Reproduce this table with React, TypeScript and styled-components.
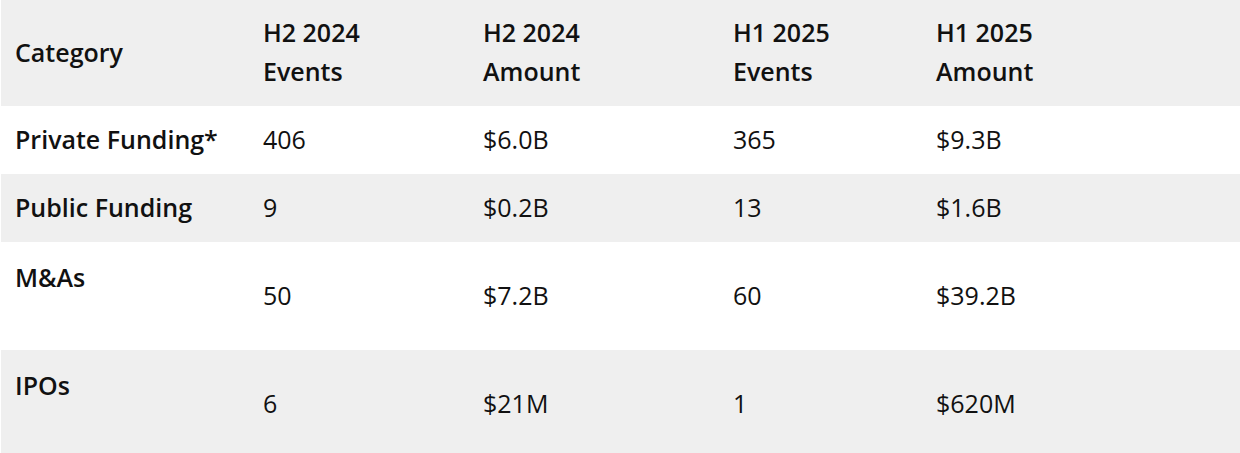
import React from "react";
import styled, { createGlobalStyle } from "styled-components";

const GlobalStyle = createGlobalStyle`
  html, body {
    margin: 0;
    padding: 0;
    background: #ffffff;
  }
  body {
    font-family: "Open Sans", "Noto Sans", "Liberation Sans", sans-serif;
    color: #111111;
  }
`;

const Wrap = styled.div`
  padding-left: 1px;
  width: 1239px;
`;

const Table = styled.table`
  width: 100%;
  border-collapse: collapse;
  table-layout: fixed;
  font-size: 25px;
  line-height: 39px;
`;

const HeadRow = styled.tr`
  background: #efefef;
`;

const HeadCell = styled.th`
  text-align: left;
  font-weight: 600;
  padding: 13px 14px 15px;
  vertical-align: middle;
  height: 106px;
  box-sizing: border-box;
`;

const BodyRow = styled.tr<{ $shaded: boolean; $tall: boolean }>`
  background: ${(p) => (p.$shaded ? "#efefef" : "#ffffff")};
  height: ${(p) => (p.$tall ? "108px" : "68px")};
`;

const LabelCell = styled.td<{ $top: boolean }>`
  font-weight: 600;
  padding: ${(p) => (p.$top ? "16px 14px 14px" : "13px 14px 15px")};
  vertical-align: ${(p) => (p.$top ? "top" : "middle")};
`;

const ValueCell = styled.td`
  font-weight: 400;
  padding: 13px 14px 15px;
  vertical-align: middle;
`;

type Row = {
  label: string;
  values: string[];
  tall: boolean;
};

const rows: Row[] = [
  { label: "Private Funding*", values: ["406", "$6.0B", "365", "$9.3B"], tall: false },
  { label: "Public Funding", values: ["9", "$0.2B", "13", "$1.6B"], tall: false },
  { label: "M&As", values: ["50", "$7.2B", "60", "$39.2B"], tall: true },
  { label: "IPOs", values: ["6", "$21M", "1", "$620M"], tall: true },
];

const headers: React.ReactNode[] = [
  "Category",
  <>H2 2024<br />Events</>,
  <>H2 2024<br />Amount</>,
  <>H1 2025<br />Events</>,
  <>H1 2025<br />Amount</>,
];

const colWidths = [248, 220, 250, 203, 318];

export default function App() {
  return (
    <>
      <GlobalStyle />
      <Wrap>
        <Table>
          <colgroup>
            {colWidths.map((w, i) => (
              <col key={i} style={{ width: w }} />
            ))}
          </colgroup>
          <thead>
            <HeadRow>
              {headers.map((h, i) => (
                <HeadCell key={i}>{h}</HeadCell>
              ))}
            </HeadRow>
          </thead>
          <tbody>
            {rows.map((r, i) => (
              <BodyRow key={r.label} $shaded={i % 2 === 1} $tall={r.tall}>
                <LabelCell $top={r.tall}>{r.label}</LabelCell>
                {r.values.map((v, j) => (
                  <ValueCell key={j}>{v}</ValueCell>
                ))}
              </BodyRow>
            ))}
          </tbody>
        </Table>
      </Wrap>
    </>
  );
}
